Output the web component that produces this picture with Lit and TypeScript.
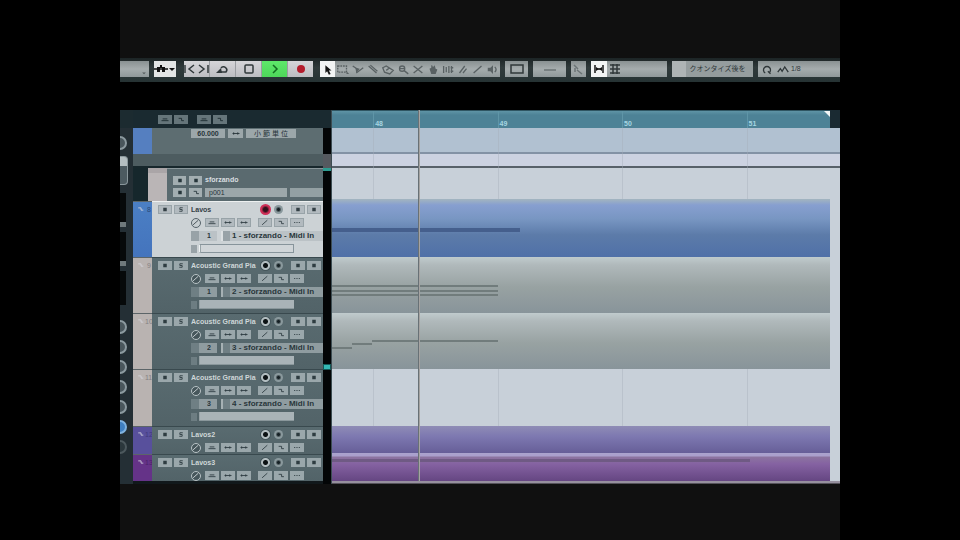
import { LitElement, html, svg, css, nothing } from "lit";
import { customElement } from "lit/decorators.js";
import { classMap } from "lit/directives/class-map.js";
import { styleMap } from "lit/directives/style-map.js";

interface Note { start: number; end: number; top: number; thick?: boolean }
interface Track {
  id: string; name: string; num: string; tone: string; port?: string; channel?: string; selected?: boolean; clip: string; notes: Note[];
}

const TRACKS: Track[] = [
  { id: "t8", name: "Lavos", num: "8", tone: "blue", port: "1 - sforzando - Midi In", channel: "1", selected: true, clip: "clip-blue",
    notes: [{ start: 0, end: 37.7, top: 50, thick: true }] },
  { id: "t9", name: "Acoustic Grand Pia", num: "9", tone: "sand", port: "2 - sforzando - Midi In", channel: "1", clip: "clip-grey",
    notes: [{ start: 0, end: 33.4, top: 50 }, { start: 0, end: 33.4, top: 59 }, { start: 0, end: 33.4, top: 66 }] },
  { id: "t10", name: "Acoustic Grand Pia", num: "10", tone: "sand", port: "3 - sforzando - Midi In", channel: "2", clip: "clip-grey",
    notes: [{ start: 0, end: 4, top: 60 }, { start: 4, end: 8, top: 54 }, { start: 8, end: 33.4, top: 48 }] },
  { id: "t11", name: "Acoustic Grand Pia", num: "11", tone: "sand", port: "4 - sforzando - Midi In", channel: "3", clip: "", notes: [] },
  { id: "t12", name: "Lavos2", num: "12", tone: "indigo", clip: "clip-indigo", notes: [] },
  { id: "t13", name: "Lavos3", num: "13", tone: "violet", clip: "clip-violet", notes: [{ start: 0, end: 84, top: 17, thick: true }] },
];

const SHAPES: Record<string, unknown> = {
  constrain: svg`<path d="M1 6h14" /><path class="f" d="M4 4h3v5H4zM9 4h3v5H9zM7 2h2v3H7z"/>`,
  down: svg`<path class="f" d="M5 5h6l-3 3z"/>`,
  toStart: svg`<path d="M3 2v8M12 2L7 6l5 4"/>`,
  toEnd: svg`<path d="M13 2v8M4 2l5 4-5 4"/>`,
  cycle: svg`<path d="M4 9h7a3 3 0 1 0-5-4"/><path class="f" d="M1 10l5-5 1 5z"/>`,
  stop: svg`<rect x="4" y="2" width="8" height="8" rx="1"/>`,
  play: svg`<path d="M6 2l4 4-4 4"/>`,
  record: svg`<circle class="f" cx="8" cy="6" r="4"/>`,
  arrow: svg`<path class="f" d="M5 1l7 6H9l2 4-2 1-2-4-2 2z"/>`,
  range: svg`<path stroke-dasharray="2 1" d="M2 2h10v7H2z"/><path class="f" d="M12 8l3 3h-3z"/>`,
  split: svg`<path d="M2 2l6 4M6 10l8-6"/><path class="f" d="M5 4l5 1-4 5z"/>`,
  draw: svg`<path d="M3 2l9 8M5 1l8 7"/>`,
  erase: svg`<path d="M2 4l4-2 8 5-4 4-6-2zM6 7l4-3"/>`,
  zoom: svg`<circle cx="7" cy="5" r="3"/><path d="M9 7l5 4M4 5h6"/>`,
  mute: svg`<path d="M3 2l10 8M13 2L3 10"/>`,
  hand: svg`<path class="f" d="M4 5l2-1V1h1l1 2 2-2 1 4 2 1-2 5H6z"/>`,
  warp: svg`<path d="M3 2v8M6 3v6M9 2v8M12 2v8M11 4h3M11 8h3"/>`,
  brush: svg`<path d="M4 10l6-8M8 10l4-5"/>`,
  line: svg`<path d="M3 10l9-8"/>`,
  speaker: svg`<path class="f" d="M2 4h3l3-3v10L5 8H2z"/><path d="M10 3q3 3 0 6"/>`,
  frame: svg`<rect x="2" y="2" width="12" height="8"/>`,
  slider: svg`<path d="M2 7h12"/>`,
  scroll: svg`<path d="M3 2l4 4M6 7l5 4M4 9V5"/>`,
  snap: svg`<path d="M4 2v8M12 2v8M6 6h4"/><path class="f" d="M5 4l3 2-3 2zM11 4L8 6l3 2z"/>`,
  grid: svg`<path d="M3 2h10M3 6h10M3 10h10M6 1v10M10 1v10"/>`,
  quant: svg`<path d="M6 10a4 4 0 1 1 4 0M9 8l3 3"/>`,
  wave: svg`<path d="M2 9l3-4 2 3 3-5 4 6"/>`,
  m: svg`<path class="f" d="M5 3h6v6H5z"/>`,
  s: svg`<path d="M11 3H6v3h4v3H5"/>`,
  piano: svg`<path d="M2 8h12M4 5h8"/>`,
  slash: svg`<path d="M3 10l9-8"/>`,
  dots: svg`<path d="M3 6h2M7 6h2M11 6h2"/>`,
  link: svg`<path d="M2 6h12M4 4v4M11 4v4"/>`,
  lane: svg`<path d="M4 4h5v4h4"/>`,
};

const glyph = (name: string) => html`<svg class="glyph" viewBox="0 0 16 12" aria-hidden="true">${SHAPES[name]}</svg>`;
const button = (label: string, icon: string, cls = "") => html`<button type="button" class="btn ${cls}" aria-label=${label} title=${label}>${glyph(icon)}</button>`;

const shared = css`
  :host, * { box-sizing: border-box; }
  button, input, select { margin: 0; padding: 0; border: 0; border-radius: 0; font: inherit; color: inherit; background: none; }
  .btn { display: flex; align-items: center; justify-content: center; flex: none; }
  .glyph { width: 16px; height: 12px; flex: none; fill: none; stroke: currentColor; stroke-width: 1.5; }
  .glyph .f { fill: currentColor; stroke: none; }
`;

@customElement("transport-bar")
export class TransportBar extends LitElement {
  static styles = [shared, css`
    :host { display: flex; gap: 5px; height: 24px; padding: 3px 0 5px; background: linear-gradient(#1c2425, #303a3b 40%, #263334); color: #30383a; font: 7px/16px "Liberation Sans", "Noto Sans CJK JP", sans-serif; overflow: hidden; }
    .seg { display: flex; flex: none; background: linear-gradient(#899192, #a5acad 50%, #90989a); }
    .blank { width: 29px; justify-content: flex-end; align-items: flex-end; color: #52595b; }
    .blank .glyph { width: 10px; height: 8px; }
    .seg > .btn { flex: 1; min-width: 0; }
    .seg > .fixed { flex: none; width: 16px; }
    .seg > .on { background: #f2f4f4; color: #141414; }
    .pair { width: 22px; background: #e3e5e5; overflow: hidden; }
    .pair > .btn { flex: none; width: 14px; color: #111; overflow: hidden; }
    .pair > .btn + .btn { width: 8px; }
    .transport { width: 129px; margin: 0 2px 0 3px; background: #999ca0; }
    .transport > .btn { flex: 2 1 0; background: linear-gradient(#d5d5d8, #bcbdc1); border-right: 1px solid #999ca0; }
    .transport > .small { flex: 1 1 0; overflow: hidden; border-right: 0; }
    .transport > .small + .small { border-right: 1px solid #999ca0; }
    .transport > .play { background: linear-gradient(#5ee86a, #4ed65a); color: #126c20; }
    .transport > .rec { color: #b41c2c; border-right: 0; }
    .tools { width: 180px; color: #596163; }
    .tools .btn { overflow: hidden; }
    .tools .glyph { width: 14px; height: 11px; }
    .color { width: 23px; } .nudge { width: 33px; } .auto { width: 15px; } .snap { width: 76px; } .q { width: 81px; }
    .quiet { color: #6b7375; }
    .q { justify-content: center; align-items: center; background: linear-gradient(90deg, #aeb4b5 0 14px, #959d9e 14px); }
    .q .btn { padding-left: 10px; white-space: nowrap; }
    .last { flex: 1; min-width: 60px; align-items: center; padding-left: 1px; }
    .last .glyph { width: 14px; height: 11px; }
    .last select { appearance: none; width: 40px; }
  `];
  render() {
    const tools = [["Range", "range"], ["Split", "split"], ["Draw", "draw"], ["Erase", "erase"], ["Zoom", "zoom"], ["Mute", "mute"], ["Hand", "hand"], ["Warp", "warp"], ["Brush", "brush"], ["Line", "line"], ["Listen", "speaker"]];
    return html`
      <div class="seg blank">${glyph("down")}</div>
      <div class="seg pair">${button("Constrain delay", "constrain")}${button("Delay menu", "down")}</div>
      <div class="seg transport">
        ${button("Previous marker", "toStart", "small")}${button("Next marker", "toEnd", "small")}${button("Cycle", "cycle")}
        ${button("Stop", "stop")}${button("Play", "play", "play")}${button("Record", "record", "rec")}
      </div>
      <div class="seg tools">${button("Select", "arrow", "on")}${tools.map(([l, i]) => button(l, i))}</div>
      <div class="seg color">${button("Color", "frame")}</div>
      <div class="seg nudge quiet">${button("Nudge", "slider")}</div>
      <div class="seg auto quiet">${button("Autoscroll", "scroll")}</div>
      <div class="seg snap">${button("Snap", "snap", "fixed on")}${button("Grid", "grid", "fixed")}</div>
      <div class="seg q"><button type="button" class="btn">クオンタイズ後を</button></div>
      <div class="seg last">${button("Quantize", "quant", "fixed")}${button("Swing", "wave", "fixed")}
        <select aria-label="Quantize value"><option>1/8</option></select></div>`;
  }
}

@customElement("track-row")
export class TrackRow extends LitElement {
  static properties = { track: { attribute: false } };
  declare track: Track;
  static styles = [shared, css`
    :host { display: flex; min-width: 0; overflow: hidden; font: bold 7px/9px "Liberation Sans", sans-serif; }
    .swatch { display: flex; justify-content: space-between; flex: none; width: 19px; padding: 3px 1px 0 3px; border-top: 1px solid #5c6568; color: #858184; font-weight: normal; }
    .swatch .glyph { width: 9px; height: 8px; color: #d5d6de; }
    .blue { background: linear-gradient(#4b7fc4, #4474bd); color: #284878; }
    .sand { background: #b9b3b1; }
    .indigo { background: #58509c; color: #40397d; }
    .violet { background: #653388; color: #4b226a; }
    .body { flex: 1; min-width: 0; padding: 1px 0 0 6px; background: linear-gradient(#596b70, #526368); border-top: 1px solid #39494e; color: #cfd7d8; }
    .selected { background: #ccd2d5; border-color: #edf0f0; color: #344046; }
    .line { display: flex; align-items: center; height: 13px; }
    .sub { padding-left: 33px; }
    .btn { width: 14px; height: 9px; margin-right: 2px; background: #9aa7ab; color: #2e3c41; }
    .btn .glyph { width: 10px; height: 7px; }
    .selected .btn { background: #b2babf; color: #344046; box-shadow: 0 0 0 1px #98a3a8 inset; }
    .name { flex: 1; min-width: 0; margin: 0 1px; overflow: hidden; white-space: nowrap; }
    .round, .selected .round { width: 11px; height: 11px; border-radius: 50%; background: radial-gradient(circle, #0c1214 0 2px, #b3bec1 3px 4px, #45565b 5px); box-shadow: none; }
    .selected .armed { background: radial-gradient(circle, #30121c 0 2px, #cf2e57 4px); }
    .monitor, .selected .monitor { background: radial-gradient(circle, #152024 0 1px, #8a999d 3px 4px); width: 9px; height: 9px; margin: 0 8px 0 1px; }
    .bypass, .selected .bypass { width: 10px; height: 10px; margin-right: 4px; border: 1px solid #b9c3c6; border-radius: 50%; background: #46565b; color: #d5dcde; box-shadow: none; }
    .selected .bypass { border-color: #56636a; background: #c8cfd2; color: #3a464c; }
    .gap { margin-right: 7px; }
    .channel, .port { appearance: none; height: 10px; color: #29363b; line-height: 10px; }
    .channel { flex: none; width: 26px; margin-right: 4px; padding-left: 16px; background: linear-gradient(90deg, #6f7f84 0 8px, #8f9ca0 8px); }
    .port { flex: 1; min-width: 0; padding-left: 11px; font-size: 8px; white-space: nowrap; background: linear-gradient(90deg, #a6b1b4 0 2px, #6f7f84 2px 9px, #8f9ca0 9px); }
    .selected .channel { background: linear-gradient(90deg, #98a2a7 0 8px, #bbc2c6 8px); }
    .selected .port { background: linear-gradient(90deg, #dce0e2 0 2px, #98a2a7 2px 9px, #bbc2c6 9px); }
    .mark { flex: none; width: 6px; height: 8px; margin-right: 2px; background: #6d7d82; }
    .selected .mark { background: #98a2a7; }
    .volume { appearance: none; width: 95px; height: 9px; background: #a9b3b7; border-bottom: 1px solid #8a979b; }
    .volume::-webkit-slider-thumb { appearance: none; width: 1px; height: 8px; background: #98a3a7; }
    .selected .volume { background: #d0d5d8; border: 1px solid #87949b; border-left-color: #eef1f2; }
  `];
  render() {
    const t = this.track;
    return html`
      <div class="swatch ${t.tone}">${glyph("lane")}<span>${t.num}</span></div>
      <div class=${classMap({ body: true, selected: !!t.selected })}>
        <div class="line">
          ${button("Mute", "m")}${button("Solo", "s")}<span class="name">${t.name}</span>
          <button type="button" class="btn round ${t.selected ? "armed" : ""}" aria-label="Record enable"></button>
          <button type="button" class="btn round monitor" aria-label="Monitor"></button>
          ${button("Read", "m")}${button("Write", "m")}
        </div>
        <div class="line sub">
          ${button("Bypass", "slash", "bypass")}${button("Inserts", "piano")}${button("Input", "link")}${button("Output", "link", "gap")}
          ${button("Edit", "slash")}${button("Lanes", "lane")}${button("Drum map", "dots")}
        </div>
        ${t.port ? html`
          <div class="line sub">
            <select class="channel" aria-label="Channel"><option>${t.channel}</option></select>
            <select class="port" aria-label="Output port"><option>${t.port}</option></select>
          </div>
          <div class="line sub"><span class="mark"></span><input class="volume" type="range" aria-label="Volume" value="0"></div>` : nothing}
      </div>`;
  }
}

@customElement("arrange-view")
export class ArrangeView extends LitElement {
  static styles = [shared, css`
    :host { display: flex; min-width: 0; }
    .inspector { flex: none; width: 13px; padding-top: 26px; background: linear-gradient(#1c2b30 0 18px, #242f35 18px); overflow: hidden; }
    .knob { width: 14px; height: 14px; margin: 0 0 6px -7px; border: 2px solid #8b999f; border-radius: 50%; background: #49565c; }
    .lit { border-color: #7fb2df; background: #3f7fc0; }
    .dim { border-color: #4c585d; background: #2b373c; }
    .panel { width: 8px; height: 29px; margin: 4px 0 8px; border: 1px solid #8a979c; border-left: 0; border-radius: 0 4px 4px 0; background: linear-gradient(#b4bec1 0 9px, #4c5a60 9px); }
    .slot { width: 6px; height: 34px; margin-bottom: 5px; border-bottom: 5px solid #6f797c; background: #06090a; }
    .last { margin-bottom: 15px; border-bottom: 0; }
    .list { flex: none; width: 190px; background: #16272c; }
    .head { display: flex; gap: 2px; height: 18px; padding: 5px 0 0 25px; background: #1a2a30; }
    .head .btn { width: 14px; height: 9px; background: #65757a; color: #1c2a2f; }
    .head .next { margin-left: 7px; }
    .glyph { width: 10px; height: 7px; }
    .tempo { display: flex; height: 26px; }
    .chip { flex: none; width: 19px; background: #557fc0; }
    .tempo-body { display: flex; flex: 1; align-items: flex-start; gap: 3px; padding: 1px 27px 0 39px; background: #5d6d71; }
    .field, .patch { height: 9px; border: 0; background: #9ca7aa; color: #263338; font: bold 7px/9px "Liberation Sans", "Noto Sans CJK JP", sans-serif; text-align: center; }
    .bpm { width: 34px; } .arrows { width: 15px; } .mode { flex: 1; min-width: 0; font-weight: normal; }
    .divider { height: 14px; background: #4d5c60; border-bottom: 2px solid #17272c; }
    .instrument { display: flex; height: 33px; padding-left: 15px; }
    .pale { flex: none; width: 19px; background: linear-gradient(#aaa5a7 0 5px, #bab5b6 5px); }
    .inst-body { flex: 1; min-width: 0; padding: 5px 0 0 6px; border-top: 1px solid #89969a; background: #5a6a6f; color: #d9dfe0; font: bold 7px/12px "Liberation Sans", sans-serif; }
    .line { display: flex; align-items: center; height: 12px; gap: 3px; }
    .inst-body .btn { width: 13px; height: 9px; background: #a3aeb1; color: #27363b; }
    .patch { width: 82px; text-align: left; padding-left: 4px; font-weight: normal; }
    .rest { flex: 1; height: 9px; background: #93a0a3; }
    .h56 { height: 56px; } .h57 { height: 57px; } .h28 { height: 28px; } .h27 { height: 27px; }
    .foot { height: 3px; background: #11181b; }
    .meter { flex: none; width: 9px; background: #030506; border-right: 1px solid #3c4c52; }
    .meter-top { height: 44px; border-top: 18px solid #1a2a30; } .meter-join { height: 14px; background: #55595f; }
    .led { height: 3px; background: #2d9c90; }
    .lower { height: 6px; margin-top: 193px; background: #34b8b4; border: 1px solid #155a58; }
    .timeline { position: relative; flex: 1; min-width: 0; background: #c8d0d9; }
    .ruler { position: relative; height: 18px; margin-right: 10px; background: linear-gradient(#5f94a6, #4d8296 4px); border-top: 1px solid #2f5562; }
    .corner { height: 18px; background: #1a2a32; }
    .bar { position: absolute; top: 0; left: var(--x); height: 17px; padding: 9px 0 0 1px; border-left: 1px solid #5f95a7; color: #a6d6e2; font: bold 7px/8px "Liberation Sans", sans-serif; }
    .end { position: absolute; top: 0; right: 0; border: 3px solid; border-color: #f2f5f5 #f2f5f5 transparent transparent; }
    .tempo-lane { height: 26px; background: #b1c1d1; border-bottom: 2px solid #8392a5; }
    .band { height: 14px; background: #ccd2e1; border-bottom: 2px solid #58616a; }
    .empty { height: 31px; }
    .lane { position: relative; z-index: 1; padding-right: 10px; }
    .first { height: 58px; }
    .clip { position: relative; height: 100%; }
    .clip-blue { background: linear-gradient(#a3b5bf, #879fd0 6px, #7896c2 20px, #5c7ba9 36px, #5070a8); }
    .clip-grey { background: linear-gradient(#c0cbcd, #b0b9bb 8px, #98a2a2 30px, #88949a); }
    .clip-indigo { background: linear-gradient(#8f8cb6, #7e79b1 10px, #665e98); border-bottom: 1px solid #aaa3cd; }
    .clip-violet { background: linear-gradient(#aaa0cd 0 2px, #8c74a0 3px, #8562a2 10px, #654682); }
    .note { position: absolute; height: 2px; background: #717c7c; }
    .thick { height: 4px; background: #455f8d; }
    .clip-violet .thick { height: 3px; background: #6f5a84; }
    .scroll { height: 3px; background: #96909e; border-bottom: 1px solid #55525a; }
    .grid { position: absolute; top: 18px; bottom: 3px; left: var(--x); width: 1px; background: #a5adb8; opacity: .4; }
    .playhead { position: absolute; z-index: 2; top: 0; bottom: 3px; left: 17%; width: 2px; background: linear-gradient(90deg, #687176 50%, #a5a3a1 50%); }
  `];
  render() {
    const heights = ["h56", "h56", "h56", "h57", "h28", "h27"];
    const bars = [{ n: "48", x: 8.1 }, { n: "49", x: 32.6 }, { n: "50", x: 57.1 }, { n: "51", x: 81.6 }];
    return html`
      <aside class="inspector">
        <div class="knob"></div><div class="panel"></div>
        <div class="slot"></div><div class="slot"></div><div class="slot last"></div>
        ${["", "", "", "", "", "lit", "dim"].map((k) => html`<div class="knob ${k}"></div>`)}
      </aside>
      <section class="list">
        <div class="head">${button("Mute all", "piano")}${button("Solo all", "lane")}${button("Read all", "piano", "next")}${button("Write all", "lane")}</div>
        <div class="tempo"><div class="chip"></div><div class="tempo-body">
          <input class="field bpm" aria-label="Tempo" value="60.000">${button("Tempo range", "link", "field arrows")}<button type="button" class="field mode">小 節 単 位</button>
        </div></div>
        <div class="divider"></div>
        <div class="instrument"><div class="pale"></div><div class="inst-body">
          <div class="line">${button("Mute", "m")}${button("Solo", "m")}<span>sforzando</span></div>
          <div class="line">${button("Edit", "m")}${button("Freeze", "lane")}<input class="patch" aria-label="Patch" value="p001"><span class="rest"></span></div>
        </div></div>
        ${TRACKS.map((t, i) => html`<track-row class=${heights[i]} .track=${t}></track-row>`)}
        <div class="foot"></div>
      </section>
      <div class="meter"><div class="meter-top"></div><div class="meter-join"></div><div class="led"></div><div class="led lower"></div></div>
      <section class="timeline">
        <div class="corner"><div class="ruler">
          ${bars.map((b) => html`<span class="bar" style=${styleMap({ "--x": (b.x * 508) / 498 + "%" })}>${b.n}</span>`)}
          <i class="end"></i>
        </div></div>
        <div class="tempo-lane"></div><div class="band"></div><div class="empty"></div>
        ${bars.map((b) => html`<div class="grid" style=${styleMap({ "--x": b.x + "%" })}></div>`)}
        ${TRACKS.map((t, i) => html`<div class="lane ${i === 0 ? "first" : heights[i]}"><div class="clip ${t.clip}">
          ${t.notes.map((n) => html`<i class=${classMap({ note: true, thick: !!n.thick })} style=${styleMap({ left: n.start + "%", width: n.end - n.start + "%", top: n.top + "%" })}></i>`)}
        </div></div>`)}
        <div class="scroll"></div>
        <div class="playhead"></div>
      </section>`;
  }
}

@customElement("app-root")
export class AppRoot extends LitElement {
  static styles = css`
    :host { display: block; min-height: 100vh; background: #000; }
    .stage { display: flex; flex-direction: column; width: 75%; min-height: 100vh; margin: 0 auto; padding-top: 58px; background: #101010; box-sizing: border-box; overflow: hidden; }
    .void { height: 28px; background: #000; }
  `;
  render() {
    return html`<main class="stage"><transport-bar></transport-bar><div class="void"></div><arrange-view></arrange-view></main>`;
  }
}
